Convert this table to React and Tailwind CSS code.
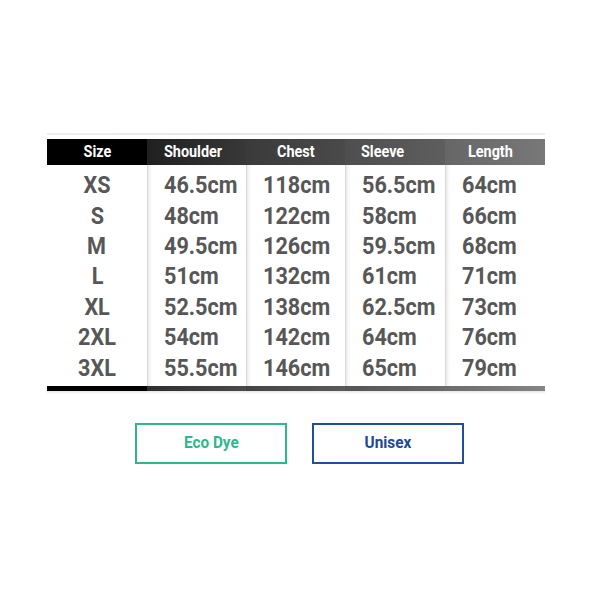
const columns = [
  { label: "Size", head: "bg-black", foot: "bg-black", align: "center" },
  { label: "Shoulder", head: "bg-gradient-to-r from-[#202020] to-[#383838]", foot: "bg-gradient-to-r from-[#2e2e2e] to-[#4a4a4a]", align: "left" },
  { label: "Chest", head: "bg-gradient-to-r from-[#3a3a3a] to-[#4a4a4a]", foot: "bg-gradient-to-r from-[#444] to-[#5a5a5a]", align: "left" },
  { label: "Sleeve", head: "bg-gradient-to-r from-[#4e4e4e] to-[#5e5e5e]", foot: "bg-gradient-to-r from-[#555] to-[#6a6a6a]", align: "left" },
  { label: "Length", head: "bg-gradient-to-r from-[#666] to-[#787878]", foot: "bg-gradient-to-r from-[#6c6c6c] to-[#858585]", align: "left" },
];

const rows = [
  ["XS", "46.5cm", "118cm", "56.5cm", "64cm"],
  ["S", "48cm", "122cm", "58cm", "66cm"],
  ["M", "49.5cm", "126cm", "59.5cm", "68cm"],
  ["L", "51cm", "132cm", "61cm", "71cm"],
  ["XL", "52.5cm", "138cm", "62.5cm", "73cm"],
  ["2XL", "54cm", "142cm", "64cm", "76cm"],
  ["3XL", "55.5cm", "146cm", "65cm", "79cm"],
];

const headPad = ["pl-0", "pl-[17px]", "pl-[31px]", "pl-[16px]", "pl-[23px]"];

export default function App() {
  return (
    <div className="w-[600px] h-[600px] bg-white font-['Roboto',sans-serif] pt-[133px]">
      <div className="ml-[47px] w-[498px]">
        <div className="h-[2px] bg-gradient-to-r from-[#eeeeee] via-[#e4e4e4] to-[#eeeeee] mb-[4px]" />
        <div className="grid grid-cols-[100px_99px_99px_100px_100px]">
          {columns.map((col, ci) => (
            <div key={col.label} className="flex flex-col">
              <div
                className={`${col.head} h-[26px] flex items-center text-white font-bold text-[16px] ${
                  col.align === "center" ? "justify-center" : headPad[ci]
                }`}
              >
                <span className={`inline-block scale-x-[0.9] ${ci === 0 ? "origin-center" : "origin-left"}`}>
                  {col.label}
                </span>
              </div>
              <div
                className={`pt-[5px] pb-[3px] ${
                  ci > 0 ? "border-l border-[#d9d9d9] shadow-[inset_4px_0_4px_-3px_rgba(0,0,0,0.12)]" : ""
                }`}
              >
                {rows.map((r) => (
                  <div
                    key={r[0]}
                    className={`h-[30.4px] flex items-center text-[24px] font-bold text-[#575757] leading-none ${
                      ci === 0 ? "justify-center" : "pl-[16px]"
                    }`}
                  >
                    <span className={`inline-block scale-x-[0.9] ${ci === 0 ? "origin-center" : "origin-left"}`}>
                      {r[ci]}
                    </span>
                  </div>
                ))}
              </div>
              <div className={`${col.foot} h-[5px]`} />
            </div>
          ))}
        </div>
        <div className="h-[3px] bg-gradient-to-b from-[#e6e6e6] to-white" />
      </div>

      <div className="flex gap-[25px] ml-[135px] mt-[29px]">
        <div className="w-[152px] h-[41px] border-2 border-[#2db88a] flex items-center justify-center text-[#2db88a] font-bold text-[17px]">
          <span className="inline-block scale-x-[0.9]">Eco Dye</span>
        </div>
        <div className="w-[152px] h-[41px] border-2 border-[#1d4f9c] flex items-center justify-center text-[#1d4a92] font-bold text-[17px]">
          <span className="inline-block scale-x-[0.9]">Unisex</span>
        </div>
      </div>
    </div>
  );
}
